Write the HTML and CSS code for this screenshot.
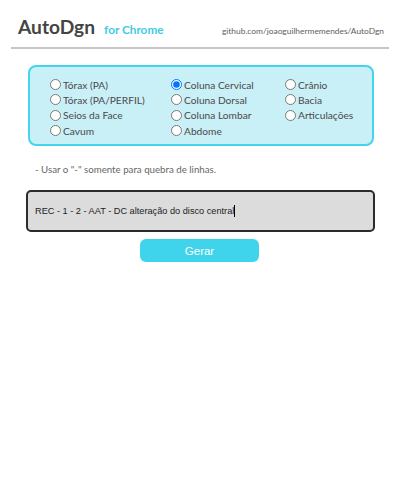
FILE: index.html
```html
<!DOCTYPE html>
<html>
<head>
<meta charset="utf-8">
<link rel="stylesheet" href="styles.css">
</head>
<body>
<header class="top">
  <div class="brand"><span class="name">AutoDgn</span><span class="sub">for Chrome</span></div>
  <a class="repo">github.com/joaoguilhermemendes/AutoDgn</a>
</header>
<div class="opts">
  <div class="col c1">
    <label><input type="radio" name="t">Tórax (PA)</label>
    <label><input type="radio" name="t">Tórax (PA/PERFIL)</label>
    <label><input type="radio" name="t">Seios da Face</label>
    <label><input type="radio" name="t">Cavum</label>
  </div>
  <div class="col c2">
    <label><input type="radio" name="t" checked>Coluna Cervical</label>
    <label><input type="radio" name="t">Coluna Dorsal</label>
    <label><input type="radio" name="t">Coluna Lombar</label>
    <label><input type="radio" name="t">Abdome</label>
  </div>
  <div class="col c3">
    <label><input type="radio" name="t">Crânio</label>
    <label><input type="radio" name="t">Bacia</label>
    <label><input type="radio" name="t">Articulações</label>
  </div>
</div>
<p class="hint">- Usar o "-" somente para quebra de linhas.</p>
<div class="field">REC - 1 - 2 - AAT - DC alteração do disco central<span class="caret"></span></div>
<div class="actions"><button class="go">Gerar</button></div>
</body>
</html>
```
FILE: styles.css
```css
body {
  margin: 0;
  font-family: Lato, "Open Sans", sans-serif;
  background: #fff;
}
.top {
  display: flex;
  justify-content: space-between;
  align-items: baseline;
  margin: 0 11px;
  padding: 15px 5px 4px 7px;
  border-bottom: 2px solid #c6c6c6;
  line-height: 24px;
}
.brand { display: flex; align-items: baseline; gap: 9px; }
.name { font-size: 19.2px; font-weight: 700; color: #454545; }
.sub { font-size: 11.8px; font-weight: 700; color: #3fcbe6; }
.repo { font-size: 8.4px; color: #5e5e5e; }
.opts {
  margin: 16px 26px 0 28px;
  background: #c9eff7;
  border: 2px solid #45d4ee;
  border-radius: 8px;
  padding: 10px 0 6px 20px;
  display: flex;
}
.col { display: flex; flex-direction: column; }
.c1 { width: 121px; }
.c2 { width: 114px; }
label {
  display: flex;
  align-items: center;
  font-size: 10.2px;
  color: #4a4a4a;
  height: 15.3px;
  white-space: nowrap;
}
input[type="radio"] {
  margin: 0 2px 0 0;
  width: 11px;
  height: 11px;
}
.hint {
  margin: 17px 0 0 35px;
  font-size: 9.7px;
  line-height: 12px;
  color: #666;
}
.field {
  margin: 15px 25px 0 26px;
  height: 38px;
  background: #dcdcdc;
  border: 2px solid #2b2b2b;
  border-radius: 5px;
  display: flex;
  align-items: center;
  padding-left: 7px;
  font-family: "Liberation Sans", Arial, sans-serif;
  font-size: 9.2px;
  color: #222;
}
.caret { display: inline-block; width: 1px; height: 12px; background: #000; }
.actions { display: flex; justify-content: center; margin-top: 7px; padding-right: 1px; }
.go {
  width: 119px;
  height: 23px;
  border: none;
  border-radius: 6px;
  background: #40d4ec;
  color: #fff;
  font-family: "Liberation Sans", Arial, sans-serif;
  font-size: 11.5px;
}
```
